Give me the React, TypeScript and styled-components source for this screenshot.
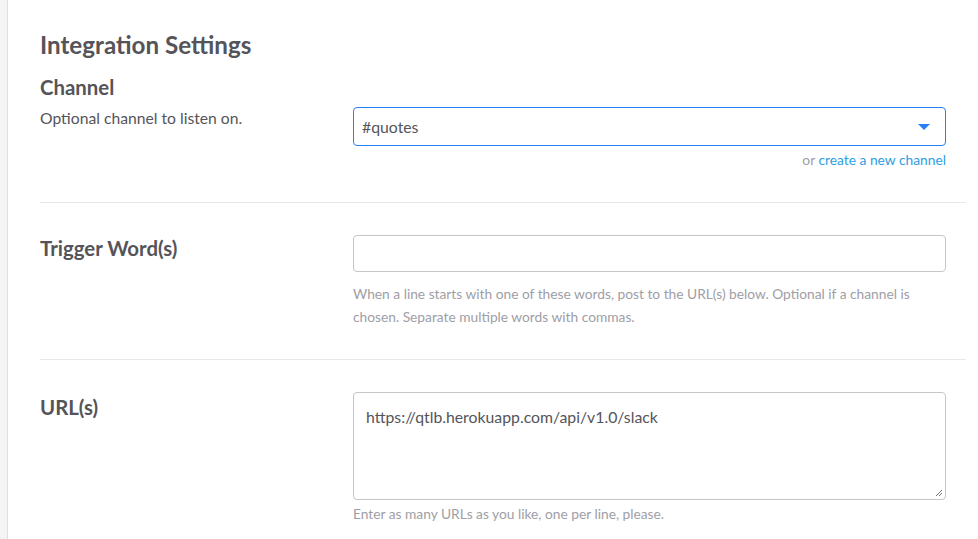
import React from 'react'
import styled, { createGlobalStyle } from 'styled-components'

const GlobalStyle = createGlobalStyle`
    html, body {
        margin: 0;
        padding: 0;
        background: #f4f4f4;
        font-family: Lato, "Noto Sans", sans-serif;
        color: #555459;
        overflow: hidden;
    }
`

const Page = styled.div`
    padding-left: 7px;
    height: 539px;
`

const Panel = styled.div`
    box-sizing: border-box;
    background: #fff;
    border-left: 1px solid #e0e0e0;
    height: 539px;
    padding: 28px 12px 0 32px;
`

const Heading = styled.h2`
    margin: 0 0 12px;
    font-size: 24.2px;
    font-weight: 700;
    line-height: 34px;
    color: #555459;
`

const Section = styled.div<{ $first?: boolean }>`
    display: grid;
    grid-template-columns: 313px 593px;
    padding: ${p => (p.$first ? '0 0 32px' : '32px 0 31px')};
    border-bottom: 1px solid #e8e8e8;
    &:last-child {
        border-bottom: none;
    }
`

const LabelCol = styled.div`
    display: flex;
    flex-direction: column;
`

const Label = styled.div<{ $top?: number }>`
    font-size: 20.4px;
    font-weight: 700;
    line-height: 26px;
    color: #555459;
    margin-top: ${p => p.$top || 0}px;
`

const Desc = styled.div`
    font-size: 15.7px;
    line-height: 22px;
    color: #555459;
    margin-top: 7px;
`

const FieldCol = styled.div<{ $offset?: number }>`
    display: flex;
    flex-direction: column;
    margin-top: ${p => p.$offset || 0}px;
`

const SelectBox = styled.div`
    box-sizing: border-box;
    height: 39px;
    border: 1px solid #2780f8;
    border-radius: 4px;
    display: flex;
    align-items: center;
    justify-content: space-between;
    padding: 0 15px 0 8px;
    font-size: 15.8px;
    color: #555459;
`

const Caret = styled.span`
    width: 0;
    height: 0;
    margin-top: 1px;
    border-left: 6px solid transparent;
    border-right: 6px solid transparent;
    border-top: 6px solid #2780f8;
`

const Aside = styled.div`
    text-align: right;
    font-size: 13.8px;
    line-height: 20px;
    margin-top: 4px;
    color: #9e9ea6;
    a {
        color: #2d9ee0;
        text-decoration: none;
    }
`

const TextInput = styled.div`
    box-sizing: border-box;
    height: 37px;
    border: 1px solid #c5c5c5;
    border-radius: 4px;
`

const TextArea = styled.div`
    position: relative;
    box-sizing: border-box;
    height: 108px;
    border: 1px solid #c5c5c5;
    border-radius: 4px;
    padding: 14px 12px;
    font-size: 15.8px;
    line-height: 20px;
    color: #555459;
`

const Grip = styled.svg`
    position: absolute;
    right: 2px;
    bottom: 2px;
`

const Help = styled.div<{ $gap?: number }>`
    font-size: 13.75px;
    line-height: 23px;
    color: #9e9ea6;
    margin-top: ${p => p.$gap || 0}px;
`

export default function App() {
    return (
        <Page>
            <GlobalStyle />
            <Panel>
                <Heading>Integration Settings</Heading>
                <Section $first>
                    <LabelCol>
                        <Label>Channel</Label>
                        <Desc>Optional channel to listen on.</Desc>
                    </LabelCol>
                    <FieldCol $offset={33}>
                        <SelectBox>
                            #quotes
                            <Caret />
                        </SelectBox>
                        <Aside>
                            or <a href="#">create a new channel</a>
                        </Aside>
                    </FieldCol>
                </Section>
                <Section>
                    <LabelCol>
                        <Label>Trigger Word(s)</Label>
                    </LabelCol>
                    <FieldCol>
                        <TextInput />
                        <Help $gap={10}>
                            When a line starts with one of these words, post to the URL(s) below. Optional if a channel is chosen. Separate multiple words with commas.
                        </Help>
                    </FieldCol>
                </Section>
                <Section>
                    <LabelCol>
                        <Label $top={2}>URL(s)</Label>
                    </LabelCol>
                    <FieldCol>
                        <TextArea>
                            https://qtlb.herokuapp.com/api/v1.0/slack
                            <Grip width="9" height="9" viewBox="0 0 9 9">
                                <path d="M8 2 L2 8 M8 5 L5 8" stroke="#777" strokeWidth="1" />
                            </Grip>
                        </TextArea>
                        <Help $gap={2}>Enter as many URLs as you like, one per line, please.</Help>
                    </FieldCol>
                </Section>
            </Panel>
        </Page>
    )
}
